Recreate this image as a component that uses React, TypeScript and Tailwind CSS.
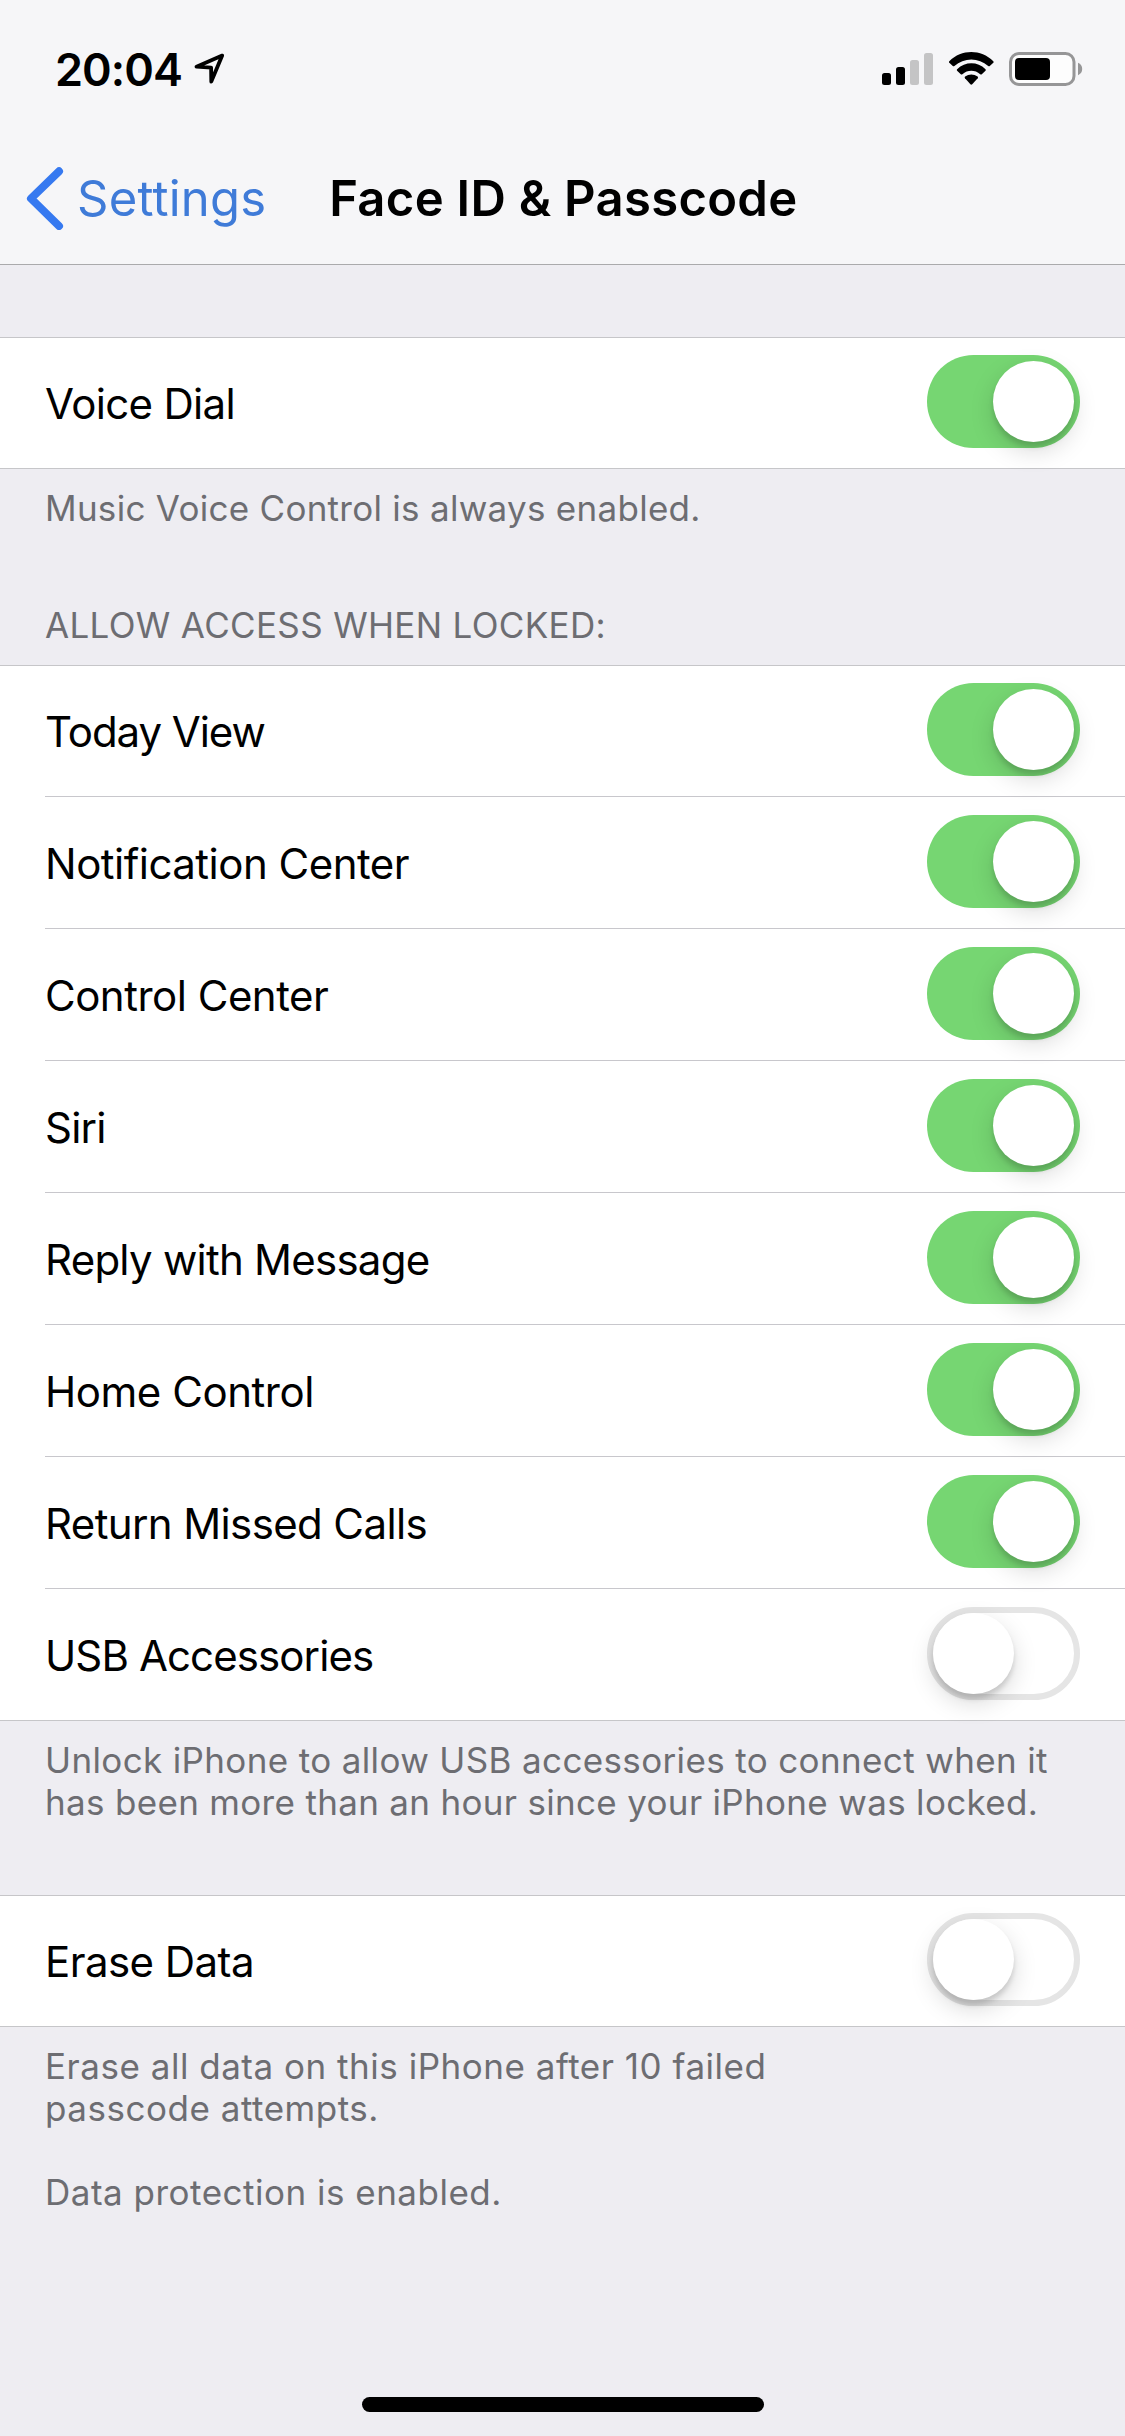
import React, { useState } from "react";

type Item = {
    label: string;
    on: boolean;
    tracking: string;
};

const voiceItems: Item[] = [
    { label: "Voice Dial", on: true, tracking: "tracking-[-0.67px]" },
];

const lockedItems: Item[] = [
    { label: "Today View", on: true, tracking: "tracking-[-1.05px]" },
    { label: "Notification Center", on: true, tracking: "tracking-[-0.51px]" },
    { label: "Control Center", on: true, tracking: "tracking-[-0.5px]" },
    { label: "Siri", on: true, tracking: "tracking-[-0.8px]" },
    { label: "Reply with Message", on: true, tracking: "tracking-[-0.75px]" },
    { label: "Home Control", on: true, tracking: "tracking-[-0.45px]" },
    { label: "Return Missed Calls", on: true, tracking: "tracking-[-0.62px]" },
    { label: "USB Accessories", on: false, tracking: "tracking-[-0.9px]" },
];

const eraseItems: Item[] = [
    { label: "Erase Data", on: false, tracking: "tracking-[-0.55px]" },
];

const Toggle = ({ on, onClick }: { on: boolean; onClick: () => void }) => (
    <button
        role="switch"
        aria-checked={on}
        onClick={onClick}
        className={
            on
                ? "mt-[18px] flex h-[93px] w-[153px] justify-end rounded-full bg-[#76d672] p-[6px]"
                : "mt-[18px] flex h-[93px] w-[153px] justify-start rounded-full border-[6px] border-[#e5e5e5] bg-white"
        }
    >
        <span className="size-[81px] rounded-full bg-white shadow-[0_9px_24px_rgba(0,0,0,0.15),0_5px_5px_rgba(0,0,0,0.13)]" />
    </button>
);

const Group = ({ items }: { items: Item[] }) => {
    const [values, setValues] = useState(items.map((item) => item.on));

    const toggle = (index: number) => {
        setValues(values.map((v, i) => (i === index ? !v : v)));
    };

    return (
        <ul className="bg-white pl-[45px] shadow-[inset_0_1px_0_#c6c6c9,inset_0_-1px_0_#c6c6c9]">
            {items.map((item, i) => (
                <li
                    key={item.label}
                    className="flex h-[132px] items-start justify-between border-b border-[#c8c7cc] pr-[45px] last:border-b-0"
                >
                    <span
                        className={`mt-[42px] text-[42px] leading-[50px] text-black ${item.tracking}`}
                    >
                        {item.label}
                    </span>
                    <Toggle on={values[i]} onClick={() => toggle(i)} />
                </li>
            ))}
        </ul>
    );
};

const StatusBar = () => (
    <div className="flex h-[138px] items-center justify-between pr-[42px] pl-[55px]">
        <div className="flex items-center">
            <span className="text-[45px] leading-none font-semibold tracking-[-0.94px]">
                20:04
            </span>
            <svg className="ml-[11px] h-[32px] w-[32px]" viewBox="193 53 32 32">
                <path
                    d="M222.2 55.6 196.5 66.7 211.1 67.6 211.3 81.6Z"
                    fill="none"
                    stroke="#000"
                    strokeWidth="3.8"
                    strokeLinejoin="round"
                />
            </svg>
        </div>
        <svg className="h-[36px] w-[201px]" viewBox="882 51 201 36">
            {/* Signal */}
            <rect x="882" y="73" width="9" height="12" rx="2.5" />
            <rect x="896" y="67" width="9" height="18" rx="2.5" />
            <rect x="910" y="60" width="9" height="25" rx="2.5" fill="#c4c4c5" />
            <rect x="924" y="53" width="9" height="32" rx="2.5" fill="#c4c4c5" />
            {/* Wifi */}
            <path d="M949.3 61.2C961.5 49 981 49 993.3 61.2Q994 62 993.3 62.8L989.8 66Q989 66.7 988.2 66C978.6 57.3 964 57.3 954.4 66Q953.6 66.7 952.8 66L949.3 62.8Q948.5 62 949.3 61.2Z" />
            <path d="M957.1 69.2C965.3 61.4 977.5 61.4 985.5 69.2Q986.2 70 985.5 70.8L981.8 74.2Q981 74.9 980.2 74.2C975 69.6 967.6 69.6 962.4 74.2Q961.6 74.9 960.8 74.2L957.1 70.8Q956.4 70 957.1 69.2Z" />
            <path d="M965.1 76.6C969 73.9 973.7 73.9 977.6 76.6Q978.5 77.4 977.7 78.3L972.2 84.3Q971.3 85.2 970.4 84.3L965 78.3Q964.2 77.4 965.1 76.6Z" />
            {/* Battery */}
            <rect
                x="1010.5"
                y="53.5"
                width="63.5"
                height="31"
                rx="8.5"
                fill="#fdfdfd"
                stroke="#969697"
                strokeWidth="3"
            />
            <rect x="1015" y="58" width="35" height="22" rx="4" />
            <path d="M1078 62.8C1080.8 64 1082.2 66.3 1082.2 69S1080.8 74 1078 75.2Z" fill="#969697" />
        </svg>
    </div>
);

const App = () => {
    return (
        <main className="flex h-[2436px] w-[1125px] flex-col overflow-hidden bg-[#eeedf2] font-['Inter',sans-serif] text-black">
            <header className="h-[265px] border-b border-[#aaaaac] bg-[#f6f6f8]">
                <StatusBar />
                <nav className="flex h-[120px] items-center">
                    <a className="flex items-center pl-[26px] text-[#3f7bd8]">
                        <svg className="h-[64px] w-[38px]" viewBox="0 0 38 64">
                            <path
                                d="M33 5.3 5 32.5 33 60"
                                fill="none"
                                stroke="#3679f0"
                                strokeWidth="8"
                                strokeLinecap="round"
                                strokeLinejoin="round"
                            />
                        </svg>
                        <span className="mt-[2px] ml-[13px] text-[49px] leading-[60px] tracking-[0.2px]">
                            Settings
                        </span>
                    </a>
                    <h1 className="mt-[2px] ml-[63px] text-[49px] leading-[60px] font-semibold tracking-[0.29px]">
                        Face ID &amp; Passcode
                    </h1>
                </nav>
            </header>

            <div className="pt-[72px]">
                <Group items={voiceItems} />
                <p className="px-[45px] pt-[18px] text-[35px] leading-[42px] tracking-[0.28px] text-[#6d6d72]">
                    Music Voice Control is always enabled.
                </p>
            </div>

            <div className="pt-[75px]">
                <h2 className="px-[45px] pb-[19px] text-[35px] leading-[42px] tracking-[0.34px] text-[#6d6d72]">
                    ALLOW ACCESS WHEN LOCKED:
                </h2>
                <Group items={lockedItems} />
                <p className="px-[45px] pt-[18px] text-[35px] leading-[42px] tracking-[0.36px] text-[#6d6d72]">
                    Unlock iPhone to allow USB accessories to connect when it
                    <br />
                    <span className="tracking-[0.32px]">
                        has been more than an hour since your iPhone was locked.
                    </span>
                </p>
            </div>

            <div className="pt-[72px]">
                <Group items={eraseItems} />
                <p className="px-[45px] pt-[18px] text-[35px] leading-[42px] tracking-[0.52px] text-[#6d6d72]">
                    Erase all data on this iPhone after 10 failed
                    <br />
                    passcode attempts.
                </p>
                <p className="px-[45px] pt-[42px] text-[35px] leading-[42px] tracking-[0.5px] text-[#6d6d72]">
                    Data protection is enabled.
                </p>
            </div>

            {/* Home indicator */}
            <div className="mt-auto mb-[24px] ml-[362px] h-[15px] w-[402px] rounded-full bg-black" />
        </main>
    );
};

export default App;
